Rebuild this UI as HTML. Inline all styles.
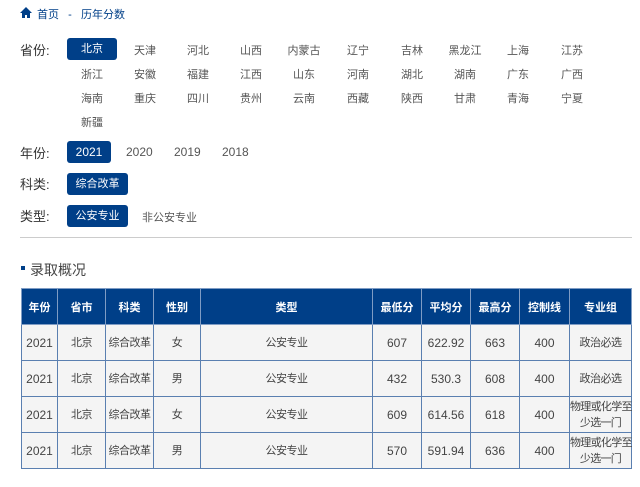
<!DOCTYPE html><html><head><meta charset="utf-8"><style>
body{margin:0;width:640px;height:487px;background:#fff;font-family:"Liberation Sans","Noto Sans CJK SC",sans-serif;color:#333;position:relative;overflow:hidden}
.a{position:absolute;white-space:nowrap}
.lab{font-size:13px;color:#333}
.it{font-size:11px;color:#555;width:50px;text-align:center}
.btn{background:#003f88;color:#fff;border-radius:3px;font-size:11px;text-align:center;height:22px;line-height:22px}
table{position:absolute;left:21px;top:288px;border-collapse:collapse;font-size:11px;width:611px;table-layout:fixed}
td,th{border:1px solid #5a7fb0;text-align:center;height:35px;padding:0;color:#444;overflow:visible}
td{font-size:12px}
th{background:#003f88;color:#fff;font-weight:bold;border-color:#7f9cc4}
td{background:#f4f4f4}
td.s{font-size:11px;letter-spacing:-0.5px;line-height:16px;white-space:nowrap}
td.w{font-size:11px;letter-spacing:-0.7px;line-height:16px;white-space:nowrap}
</style></head><body>
<svg class="a" style="left:20px;top:7px" width="12" height="11" viewBox="0 0 12 11"><path d="M6 0L0 6h2v5h3V8h2v3h3V6h2z" fill="#003f88"/></svg>
<div class="a" style="left:37px;top:6px;font-size:11px;color:#003f88">首页&nbsp;&nbsp;&nbsp;-&nbsp;&nbsp;&nbsp;历年分数</div>
<div class="a lab" style="left:20px;top:40px">省份:</div>
<div class="a btn" style="left:67px;top:38px;width:50px">北京</div>
<div class="a it" style="left:120px;top:42px">天津</div><div class="a it" style="left:173px;top:42px">河北</div><div class="a it" style="left:226px;top:42px">山西</div><div class="a it" style="left:279px;top:42px">内蒙古</div><div class="a it" style="left:333px;top:42px">辽宁</div><div class="a it" style="left:387px;top:42px">吉林</div><div class="a it" style="left:440px;top:42px">黑龙江</div><div class="a it" style="left:493px;top:42px">上海</div><div class="a it" style="left:547px;top:42px">江苏</div>
<div class="a it" style="left:67px;top:66px">浙江</div><div class="a it" style="left:120px;top:66px">安徽</div><div class="a it" style="left:173px;top:66px">福建</div><div class="a it" style="left:226px;top:66px">江西</div><div class="a it" style="left:279px;top:66px">山东</div><div class="a it" style="left:333px;top:66px">河南</div><div class="a it" style="left:387px;top:66px">湖北</div><div class="a it" style="left:440px;top:66px">湖南</div><div class="a it" style="left:493px;top:66px">广东</div><div class="a it" style="left:547px;top:66px">广西</div>
<div class="a it" style="left:67px;top:90px">海南</div><div class="a it" style="left:120px;top:90px">重庆</div><div class="a it" style="left:173px;top:90px">四川</div><div class="a it" style="left:226px;top:90px">贵州</div><div class="a it" style="left:279px;top:90px">云南</div><div class="a it" style="left:333px;top:90px">西藏</div><div class="a it" style="left:387px;top:90px">陕西</div><div class="a it" style="left:440px;top:90px">甘肃</div><div class="a it" style="left:493px;top:90px">青海</div><div class="a it" style="left:547px;top:90px">宁夏</div>
<div class="a it" style="left:67px;top:114px">新疆</div>
<div class="a lab" style="left:20px;top:143px">年份:</div>
<div class="a btn" style="left:67px;top:141px;width:44px;font-size:12px">2021</div>
<div class="a" style="left:126px;top:145px;font-size:12px;color:#555">2020</div>
<div class="a" style="left:174px;top:145px;font-size:12px;color:#555">2019</div>
<div class="a" style="left:222px;top:145px;font-size:12px;color:#555">2018</div>
<div class="a lab" style="left:20px;top:174px">科类:</div>
<div class="a btn" style="left:67px;top:173px;width:61px">综合改革</div>
<div class="a lab" style="left:20px;top:206px">类型:</div>
<div class="a btn" style="left:67px;top:205px;width:61px">公安专业</div>
<div class="a" style="left:142px;top:209px;font-size:11px;color:#555">非公安专业</div>
<div class="a" style="left:20px;top:237px;width:612px;height:1px;background:#ccc"></div>
<div class="a" style="left:21px;top:266px;width:4px;height:4px;background:#003f88"></div>
<div class="a" style="left:30px;top:260px;font-size:14px;color:#444">录取概况</div>
<table>
<tr><th style="width:35px">年份</th><th style="width:47px">省市</th><th style="width:47px">科类</th><th style="width:46px">性别</th><th style="width:171px">类型</th><th style="width:48px">最低分</th><th style="width:48px">平均分</th><th style="width:48px">最高分</th><th style="width:49px">控制线</th><th>专业组</th></tr>
<tr><td>2021</td><td class="s">北京</td><td class="s">综合改革</td><td class="s">女</td><td class="s">公安专业</td><td>607</td><td>622.92</td><td>663</td><td>400</td><td class="s">政治必选</td></tr>
<tr><td>2021</td><td class="s">北京</td><td class="s">综合改革</td><td class="s">男</td><td class="s">公安专业</td><td>432</td><td>530.3</td><td>608</td><td>400</td><td class="s">政治必选</td></tr>
<tr><td>2021</td><td class="s">北京</td><td class="s">综合改革</td><td class="s">女</td><td class="s">公安专业</td><td>609</td><td>614.56</td><td>618</td><td>400</td><td class="w">物理或化学至<br>少选一门</td></tr>
<tr><td>2021</td><td class="s">北京</td><td class="s">综合改革</td><td class="s">男</td><td class="s">公安专业</td><td>570</td><td>591.94</td><td>636</td><td>400</td><td class="w">物理或化学至<br>少选一门</td></tr>
</table>
</body></html>
